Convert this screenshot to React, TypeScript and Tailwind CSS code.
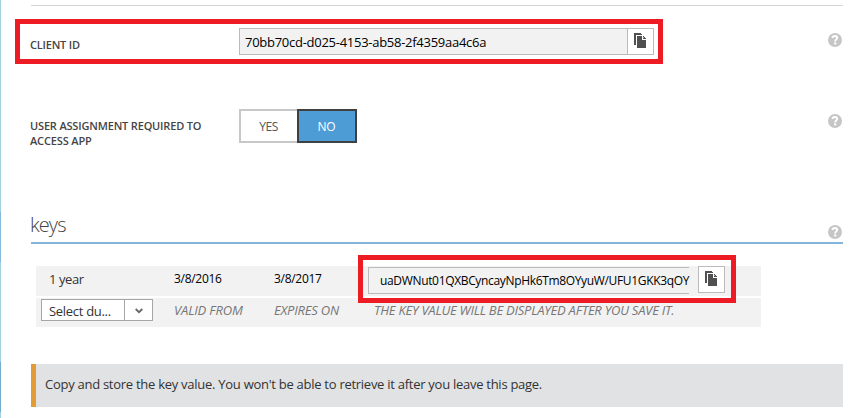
import type { ReactNode } from "react";

function HelpIcon() {
  return (
    <svg width="14" height="14" viewBox="0 0 14 14" className="block shrink-0">
      <circle cx="7" cy="7" r="7" fill="#c6c6c6" />
      <path d="M4.7 4.9V3.8Q5.8 3.1 7 3.1Q9.1 3.1 9.1 4.9Q9.1 5.8 8.1 6.5Q7.2 7.1 7.2 8.4" fill="none" stroke="#fff" strokeWidth="2" />
      <rect x="6.1" y="9.4" width="2.2" height="2" fill="#fff" />
    </svg>
  );
}

function CopyIcon() {
  return (
    <svg width="12" height="15" viewBox="0 0 12 15" className="block" shapeRendering="crispEdges">
      <path d="M0 0H7V1H8V2H2V12H0Z" fill="#505050" />
      <path d="M3 3H8V7H12V15H3Z" fill="#505050" />
      <path d="M9 3H10V4H11V5H12V6H9Z" fill="#505050" />
      <path d="M9 5H10V4H9Z" fill="#aaa" />
    </svg>
  );
}

function CopyButton() {
  return (
    <button className="flex h-[27px] w-[27px] shrink-0 items-start border border-[#bbb] bg-white pl-[6px] pt-[4px]">
      <CopyIcon />
    </button>
  );
}

function Label({ children }: { children: ReactNode }) {
  return <div className="w-[208px] shrink-0 whitespace-nowrap text-[11px] font-semibold leading-[15px] text-[#444]">{children}</div>;
}

export default function App() {
  return (
    <div className="relative flex h-[418px] w-[854px] overflow-hidden bg-white font-['Open_Sans','Noto_Sans',sans-serif] text-[#333]">
      <div className="flex w-px shrink-0 flex-col bg-[#a5cfe2]">
        <div className="mt-[212px] h-[50px] bg-[#86b9da]" />
        <div className="mt-[100px] h-[50px] bg-[#74aecd]" />
      </div>
      <main className="ml-[30px] flex w-[812px] flex-col pt-[5px]">
        <div className="h-px shrink-0 bg-[#d5d5d5]" />

        <div className="mt-[22px] flex h-[27px] shrink-0">
          <Label>
            <div className="-ml-px pt-[9px] tracking-[-0.2px]">CLIENT ID</div>
          </Label>
          <div className="h-[27px] w-[388px] border border-r-0 border-[#bbb] bg-[#f2f2f2] pl-[5px] text-[13px] leading-[26px] text-black">
            <span className="tracking-[-0.27px]">70bb70cd-d025-4153-ab58-2f4359aa4c6a</span>
          </div>
          <CopyButton />
          <div className="ml-auto mr-px pt-[5px]">
            <HelpIcon />
          </div>
        </div>

        <div className="mt-[54px] flex h-[34px] shrink-0">
          <Label>
            <div className="-ml-px pt-[9px] tracking-[-0.17px]">USER ASSIGNMENT REQUIRED TO</div>
            <div className="-ml-px tracking-[-0.15px]">ACCESS APP</div>
          </Label>
          <button className="h-[34px] w-[58px] border-2 border-r-0 border-[#c8c8c8] bg-white pr-px text-[12px] leading-[32px] text-[#555]">
            <span className="tracking-[-0.5px]">YES</span>
          </button>
          <button className="h-[34px] w-[60px] border-2 border-[#404040] bg-[#4e9cd6] pr-px text-[12px] leading-[32px] text-white">
            <span className="tracking-[-0.2px]">NO</span>
          </button>
          <div className="ml-auto mr-px pt-[5px]">
            <HelpIcon />
          </div>
        </div>

        <div className="mt-[69px] flex h-[32px] shrink-0 justify-between border-b-2 border-[#84b6dd]">
          <h2 className="-ml-px text-[20px] font-light leading-[26px] text-[#444]">
            <span className="tracking-[-0.9px]">keys</span>
          </h2>
          <div className="mr-px pt-[13px]">
            <HelpIcon />
          </div>
        </div>

        <section className="ml-[5px] mt-[22px] flex w-[725px] shrink-0 flex-col gap-[2px] whitespace-nowrap">
          <div className="flex h-[30px] bg-[#f2f2f2]">
            <div className="w-[138px] pl-[13px] text-[13px] leading-[27px]">
              <span className="tracking-[-0.4px]">1 year</span>
            </div>
            <div className="w-[100px] text-[12px] leading-[26px] text-black">
              <span className="tracking-[-0.3px]">3/8/2016</span>
            </div>
            <div className="w-[94px] text-[12px] leading-[26px] text-black">
              <span className="tracking-[-0.3px]">3/8/2017</span>
            </div>
            <div className="mt-px h-[27px] w-[321px] border border-r-0 border-[#bbb] pl-[11px] text-[12px] leading-[25px] text-black">
              <span className="tracking-[-0.34px]">uaDWNut01QXBCyncayNpHk6Tm8OYyuW/UFU1GKK3qOY</span>
            </div>
            <div className="ml-[9px]">
              <CopyButton />
            </div>
          </div>
          <div className="flex h-[29px] bg-[#f2f2f2] text-[13px] italic leading-[24px] text-[#777]">
            <div className="ml-[5px] mt-px flex h-[22px] w-[112px] border border-[#a6a6a6] bg-white not-italic text-[#333]">
              <div className="w-[83px] border-r border-[#a6a6a6] pl-[7px] text-[13px] leading-[23px]">
                <span className="tracking-[-0.3px]">Select du...</span>
              </div>
              <svg width="8" height="6" viewBox="0 0 8 6" className="ml-[10px] mt-[8px]">
                <path d="M.7 1L4 4.2L7.3 1" fill="none" stroke="#666" strokeWidth="1.8" />
              </svg>
            </div>
            <div className="ml-[21px] w-[100px]">
              <span className="tracking-[-0.15px]">VALID FROM</span>
            </div>
            <div className="w-[100px]">
              <span className="tracking-[-0.2px]">EXPIRES ON</span>
            </div>
            <div>
              <span className="tracking-[-0.24px]">THE KEY VALUE WILL BE DISPLAYED AFTER YOU SAVE IT.</span>
            </div>
          </div>
        </section>

        <div className="mt-[37px] h-[43px] shrink-0 border-l-[5px] border-[#e39b35] bg-[#e1e2e4] pl-[9px] text-[13px] leading-[41px] text-[#333]">
          <span className="tracking-[-0.27px]">Copy and store the key value. You won't be able to retrieve it after you leave this page.</span>
        </div>
      </main>

      <div className="absolute left-[15px] top-[19px] h-[45px] w-[648px] border-[5px] border-[#ed1c24]" />
      <div className="absolute left-[358px] top-[255px] h-[48px] w-[378px] border-[5px] border-[#ed1c24]" />
    </div>
  );
}
